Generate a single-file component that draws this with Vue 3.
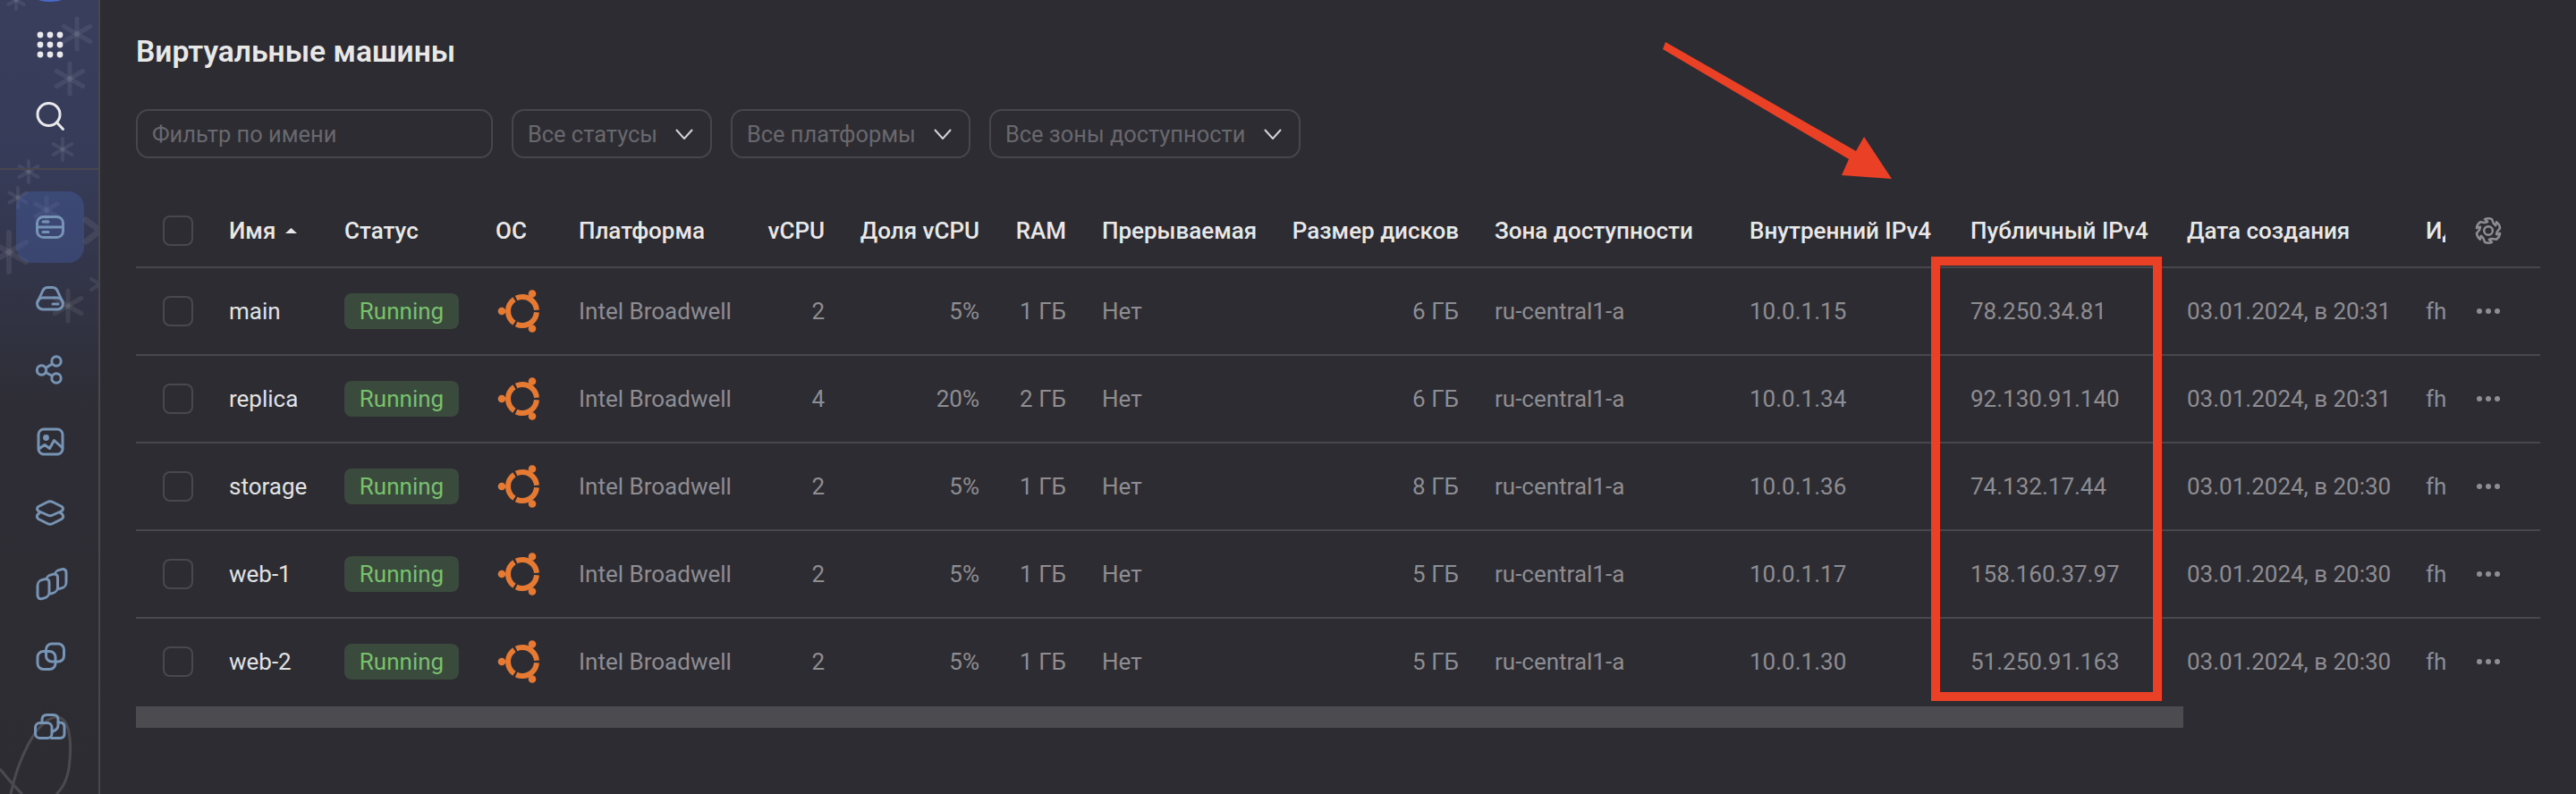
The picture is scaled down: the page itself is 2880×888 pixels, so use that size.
<script setup>
const headers = [
  { t: 'vCPU', r: true }, { t: 'Доля vCPU', r: true }, { t: 'RAM', r: true }, { t: 'Прерываемая' },
  { t: 'Размер дисков', r: true }, { t: 'Зона доступности' }, { t: 'Внутренний IPv4' }, { t: 'Публичный IPv4' },
  { t: 'Дата создания' }
]
const rows = [
  { name: 'main', cpu: 2, share: '5%', ram: '1 ГБ', disk: '6 ГБ', ip: '10.0.1.15', pub: '78.250.34.81', date: '03.01.2024, в 20:31' },
  { name: 'replica', cpu: 4, share: '20%', ram: '2 ГБ', disk: '6 ГБ', ip: '10.0.1.34', pub: '92.130.91.140', date: '03.01.2024, в 20:31' },
  { name: 'storage', cpu: 2, share: '5%', ram: '1 ГБ', disk: '8 ГБ', ip: '10.0.1.36', pub: '74.132.17.44', date: '03.01.2024, в 20:30' },
  { name: 'web-1', cpu: 2, share: '5%', ram: '1 ГБ', disk: '5 ГБ', ip: '10.0.1.17', pub: '158.160.37.97', date: '03.01.2024, в 20:30' },
  { name: 'web-2', cpu: 2, share: '5%', ram: '1 ГБ', disk: '5 ГБ', ip: '10.0.1.30', pub: '51.250.91.163', date: '03.01.2024, в 20:30' }
]
const stars = [
  [18, 0, 10, 4], [86, 38, 17, 5], [78, 88, 17, 5], [70, 167, 12, 4], [32, 192, 12, 4],
  [20, 221, 11, 4], [52, 235, 14, 5], [10, 282, 22, 6], [76, 342, 17, 5]
]
const arms = [0, 60, 120]
const gearPath = (() => {
  let d = ''
  const p = (ang, r) => `${(15 + r * Math.cos(ang)).toFixed(2)} ${(15 + r * Math.sin(ang)).toFixed(2)}`
  for (let i = 0; i < 6; i++) {
    const a = (i * 60 - 90) * Math.PI / 180
    d += `${i === 0 ? 'M' : 'L'}${p(a - 0.3, 13.4)} Q${p(a, 14.6)} ${p(a + 0.3, 13.4)} L${p(a + 0.62, 10)} Q${p(a + 0.79, 9.6)} ${p(a + 0.96, 10)} `
  }
  return d + 'Z'
})()
</script>

<template>
  <div class="page">
    <aside class="side">
      <svg class="decor" width="110" height="888" viewBox="0 0 110 888" aria-hidden="true">
        <g v-for="(s, i) in stars" :key="i" :transform="`translate(${s[0]} ${s[1]})`">
          <line v-for="a in arms" :key="a" x1="0" :y1="-s[2]" x2="0" :y2="s[2]" :stroke-width="s[3]" :transform="`rotate(${a})`" class="star" />
        </g>
        <path class="star" d="M96 246 L112 258 L96 270" fill="none" stroke-width="7" />
        <path class="star" d="M102 312 L112 318 L102 324" fill="none" stroke-width="4" />
        <path class="loop" d="M12 888 C20 850 40 806 62 802 C78 800 80 830 78 850 C77 866 72 880 63 888" />
        <path class="loop" d="M0 860 C8 870 16 880 25 888" />
      </svg>

      <div class="top-group">
        <div class="item">
          <svg width="40" height="40" viewBox="0 0 40 40" fill="#e9e9ec">
            <g v-for="y in [9, 20, 31]" :key="y">
              <circle v-for="x in [9, 20, 31]" :key="x" :cx="x" :cy="y" r="3.4" />
            </g>
          </svg>
        </div>
        <div class="item">
          <svg width="40" height="40" viewBox="0 0 40 40" fill="none" stroke="#e9e9ec" stroke-width="3" stroke-linecap="round">
            <circle cx="18.5" cy="18" r="12.5" />
            <path d="M27.5 27l7 7.5" />
          </svg>
        </div>
      </div>

      <nav class="nav">
        <div class="item active">
          <svg width="40" height="40" viewBox="0 0 40 40" class="ico">
            <rect x="5.5" y="8.5" width="29" height="23" rx="7" />
            <path d="M5.5 20h29M12 14h6M12 25.5h6" />
          </svg>
        </div>
        <div class="item">
          <svg width="40" height="40" viewBox="0 0 40 40" class="ico">
            <path d="M6 24l5-11q2-5.500 6-5.500h6q4 0 6 5.500l5 11" />
            <rect x="5.500" y="19" width="29" height="13" rx="6.500" />
            <path d="M23 26h6" />
          </svg>
        </div>
        <div class="item">
          <svg width="40" height="40" viewBox="0 0 40 40" class="ico">
            <circle cx="27" cy="10" r="5.200" />
            <circle cx="10.500" cy="20" r="5.200" />
            <circle cx="27" cy="29" r="5.200" />
            <path d="M15 17.500l7.500-4.500M15 22.500l7.500 4" />
          </svg>
        </div>
        <div class="item">
          <svg width="40" height="40" viewBox="0 0 40 40" class="ico">
            <rect x="7" y="6" width="27" height="28" rx="6" />
            <path d="M7.500 28l6.500-4.500 5.500 4 5-9 9.500 8.500" />
            <circle cx="15.500" cy="15.500" r="3.400" class="solid" />
          </svg>
        </div>
        <div class="item">
          <svg width="40" height="40" viewBox="0 0 40 40" class="ico">
            <path d="M17 7.500q3-1.500 6 0l10 5q3 2.500 0 5l-10 4.500q-3 1.500-6 0l-10-4.500q-3-2.500 0-5z" />
            <path d="M8.500 19.500l-2 1.500q-2.500 3 .5 5.500l10 5q3 1.500 6 0l10-5q3-2.500.5-5.500l-2-1.500" />
          </svg>
        </div>
        <div class="item">
          <svg width="40" height="40" viewBox="0 0 40 40" class="ico stack">
            <rect x="25" y="3" width="13" height="21" rx="5" transform="skewY(-14) translate(0 8)" />
            <rect x="15.500" y="9" width="13" height="21" rx="5" transform="skewY(-14) translate(0 5)" />
            <rect x="6" y="15" width="13" height="21" rx="5" transform="skewY(-14) translate(0 2.200)" />
          </svg>
        </div>
        <div class="item">
          <svg width="40" height="40" viewBox="0 0 40 40" class="ico">
            <rect x="6" y="14.500" width="20" height="20" rx="6.500" />
            <rect x="15.500" y="6" width="20" height="20" rx="6.500" />
          </svg>
        </div>
        <div class="item">
          <svg width="40" height="40" viewBox="0 0 40 40" class="ico">
            <rect x="3.500" y="14.500" width="18.500" height="17" rx="5" />
            <path d="M11 13v-2q0-5.500 5.500-5.500h7q5.500 0 5.500 5.500v6q0 5-6 7" />
            <path d="M29 14h2q5 0 5 5v7.500q0 5-5 5H21.500" />
          </svg>
        </div>
      </nav>
    </aside>

    <main class="main">
      <h1 class="title">Виртуальные машины</h1>

      <div class="filters">
        <div class="field input">Фильтр по имени</div>
        <div class="field select w1">Все статусы
          <svg width="20" height="12" viewBox="0 0 20 12" class="chev"><path d="M1 1 10 11 19 1" /></svg>
        </div>
        <div class="field select w2">Все платформы
          <svg width="20" height="12" viewBox="0 0 20 12" class="chev"><path d="M1 1 10 11 19 1" /></svg>
        </div>
        <div class="field select w3">Все зоны доступности
          <svg width="20" height="12" viewBox="0 0 20 12" class="chev"><path d="M1 1 10 11 19 1" /></svg>
        </div>
      </div>

      <div class="table">
        <div class="row head">
          <div class="cell check"><span class="box"></span></div>
          <div class="cell sorted">Имя
            <svg width="13" height="6" viewBox="0 0 13 6" class="caret"><path d="M6.500 0 13 6H0z" /></svg>
          </div>
          <div class="cell">Статус</div>
          <div class="cell">ОС</div>
          <div class="cell">Платформа</div>
          <div v-for="h in headers" :key="h.t" class="cell" :class="{ right: h.r }">{{ h.t }}</div>
          <div class="cell idcol">Идентификатор</div>
          <div class="cell act">
            <svg width="30" height="30" viewBox="0 0 30 30" class="gear">
              <path :d="gearPath" />
              <circle cx="15" cy="15" r="4.800" />
            </svg>
          </div>
        </div>

        <div v-for="r in rows" :key="r.name" class="row body">
          <div class="cell check"><span class="box"></span></div>
          <div class="cell name">{{ r.name }}</div>
          <div class="cell"><span class="badge">Running</span></div>
          <div class="cell logo">
            <svg width="50" height="50" viewBox="0 0 50 50" class="ubuntu">
              <circle cx="29" cy="25" r="16" pathLength="120" class="ring" />
              <circle cx="6" cy="25" r="4.300" />
              <circle cx="40" cy="5.500" r="4.300" />
              <circle cx="40" cy="44.500" r="4.300" />
            </svg>
          </div>
          <div class="cell">Intel Broadwell</div>
          <div class="cell right">{{ r.cpu }}</div>
          <div class="cell right">{{ r.share }}</div>
          <div class="cell right">{{ r.ram }}</div>
          <div class="cell">Нет</div>
          <div class="cell right">{{ r.disk }}</div>
          <div class="cell">ru-central1-a</div>
          <div class="cell">{{ r.ip }}</div>
          <div class="cell">{{ r.pub }}</div>
          <div class="cell">{{ r.date }}</div>
          <div class="cell idcol">fhm4kq8c2v7d1s</div>
          <div class="cell act">
            <svg width="30" height="8" viewBox="0 0 30 8" class="dots">
              <circle cx="5" cy="4" r="3" /><circle cx="15" cy="4" r="3" /><circle cx="25" cy="4" r="3" />
            </svg>
          </div>
        </div>
      </div>

      <div class="scrollbar"></div>
    </main>

    <div class="mark-box"></div>
    <svg class="mark-arrow" width="280" height="170" viewBox="1850 40 280 170" aria-hidden="true">
      <polygon points="1862,47 1859,55 2067,178 2059,196 2115,200 2084,153 2075,169" />
    </svg>
  </div>
</template>

<style>
html, body { margin: 0; background: #2d2c33; }
</style>

<style scoped>
.page {
  position: relative;
  display: flex;
  width: 2880px;
  height: 888px;
  overflow: hidden;
  background: #2d2c33;
  font-family: Roboto, "Noto Sans", sans-serif;
  font-size: 26px;
  color: #8e8d91;
}
.side {
  position: relative;
  flex: none;
  box-sizing: border-box;
  width: 112px;
  height: 888px;
  border-right: 2px solid #48474d;
  background: linear-gradient(180deg, #383e5c 0, #363b58 190px, #2e2d35 460px, #2d2c33 100%);
}
.side::before {
  content: "";
  position: absolute;
  left: 37px;
  top: -12px;
  width: 38px;
  height: 14px;
  border-radius: 50%;
  background: #4a69c9;
}
.decor { position: absolute; left: 0; top: 0; }
.star { stroke: rgba(255, 255, 255, 0.075); stroke-linecap: round; }
.loop { fill: none; stroke: #4b4a4f; stroke-width: 3; }
.top-group {
  position: relative;
  box-sizing: border-box;
  height: 190px;
  padding-top: 10px;
  border-bottom: 2px solid #48474d;
  margin-bottom: 24px;
}
.nav { position: relative; }
.item {
  display: flex;
  align-items: center;
  justify-content: center;
  height: 80px;
  margin: 0 16px 0 18px;
  width: 76px;
}
.item.active {
  background: rgba(72, 98, 170, 0.38);
  border-radius: 18px;
}
.ico { fill: none; stroke: #7794b4; stroke-width: 3; stroke-linecap: round; stroke-linejoin: round; }
.ico .solid { fill: #7794b4; stroke: none; }
.ico.stack rect { fill: #2e2d35; }
.main {
  flex: 1;
  min-width: 0;
  padding: 38px 0 0 40px;
}
.title {
  margin: 0 0 44px;
  font-size: 33.6px;
  line-height: 40px;
  font-weight: 600;
  color: #e8e8e9;
}
.filters { display: flex; gap: 21px; font-size: 25.4px; }
.field {
  box-sizing: border-box;
  display: flex;
  align-items: center;
  height: 55px;
  padding: 0 19px 0 16px;
  border: 2px solid #47464c;
  border-radius: 14px;
  color: #69686d;
}
.input { width: 399px; }
.select { justify-content: space-between; }
.w1 { width: 224px; }
.w2 { width: 268px; }
.w3 { width: 348px; }
.chev { fill: none; stroke: #d4d4d6; stroke-width: 2; }
.table { width: 2688px; margin-top: 25px; }
.row {
  display: grid;
  grid-template-columns: 84px 129px 169px 93px 215px 100px 173px 97px 215px 224px 285px 247px 242px 267px 42px 106px;
  height: 98px;
  box-sizing: border-box;
  border-bottom: 2px solid #48474c;
}
.row:last-child { border-bottom-color: transparent; }
.head { color: #e8e8e9; font-weight: 500; padding-top: 16px; }
.cell {
  display: flex;
  align-items: center;
  padding: 0 20px;
  white-space: nowrap;
  min-width: 0;
}
.right { justify-content: flex-end; }
.check { padding: 0 0 0 30px; }
.box {
  box-sizing: border-box;
  width: 34px;
  height: 34px;
  border: 2px solid #49484e;
  border-radius: 8px;
}
.sorted { gap: 11px; }
.caret { fill: #e8e8e9; }
.name { color: #e2e2e3; }
.badge {
  display: flex;
  align-items: center;
  justify-content: center;
  width: 128px;
  height: 40px;
  border-radius: 8px;
  background: #3a4a3c;
  color: #78c06e;
}
.ubuntu { fill: #e67a33; }
.ring { fill: none; stroke: #e67a33; stroke-width: 6; stroke-dasharray: 37 3; stroke-dashoffset: -1.5; }
.logo { padding: 0 0 0 21px; }
.idcol { overflow: hidden; padding-right: 0; display: flex; }
.act { padding: 0 0 0 33px; }
.gear { fill: none; stroke: #8e8d91; stroke-width: 2.500; stroke-linejoin: round; }
.dots { fill: #8e8d91; }
.scrollbar { width: 2289px; height: 24px; background: #4c4b50; }
.mark-box {
  position: absolute;
  left: 2159px;
  top: 287px;
  box-sizing: border-box;
  width: 258px;
  height: 497px;
  border: 10px solid #ea4025;
}
.mark-arrow { position: absolute; left: 1850px; top: 40px; fill: #ea4025; }
</style>
